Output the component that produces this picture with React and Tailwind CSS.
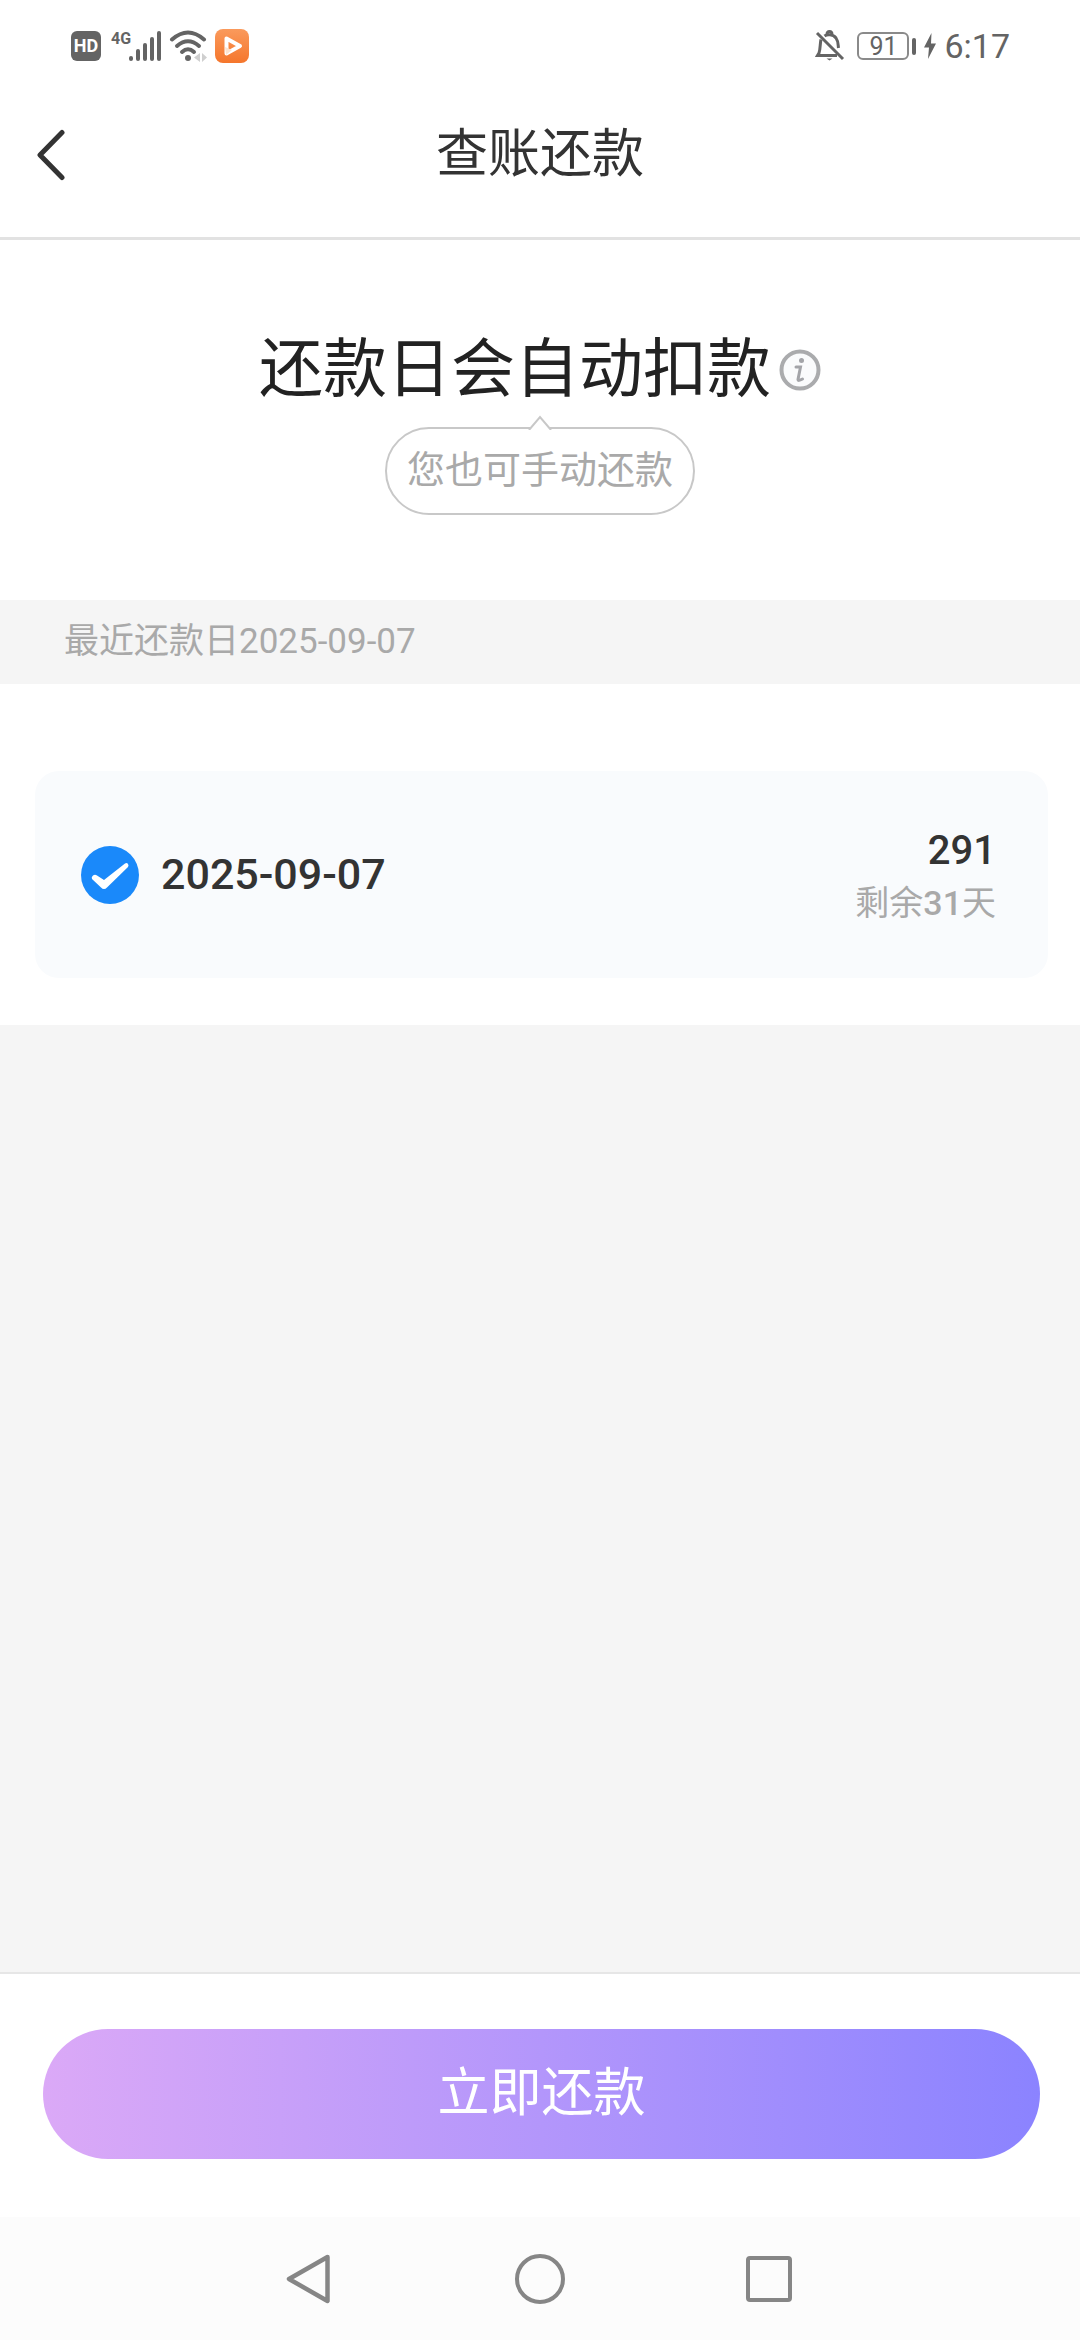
import { useState } from 'react';

function StatusBar() {
  return (
    <div className="flex items-center justify-between h-[92px] pl-[71px] pr-[70px] text-[#646464]">
      <div className="flex items-center gap-2">
        <span className="flex items-center justify-center w-[30px] h-[30px] rounded-md bg-[#646464] text-white text-lg font-bold">
          HD
        </span>
        <svg width="52" height="34" viewBox="0 0 52 34" fill="currentColor">
          <text x="2" y="15" fontSize="16" fontWeight="700">4G</text>
          <rect x="20" y="27" width="4" height="5" rx="2" />
          <rect x="27" y="20" width="4" height="12" rx="2" />
          <rect x="34" y="14" width="4" height="18" rx="2" />
          <rect x="41" y="8" width="4" height="24" rx="2" />
          <rect x="48" y="2" width="4" height="30" rx="2" />
        </svg>
        <svg width="38" height="34" viewBox="0 0 38 34" fill="none">
          <g stroke="currentColor" strokeWidth="4" strokeLinecap="round">
            <path d="M3 10.500Q19 -3.500 35 10.500" />
            <path d="M8 17Q19 7.500 30 17" />
            <path d="M13 23Q19 17.500 25 23" />
          </g>
          <circle cx="19" cy="29" r="3" fill="currentColor" />
          <path d="M31 24v9l-6-4.500zM33 24v9l5-4.500z" fill="#cfcfcf" />
        </svg>
        <svg width="34" height="34" viewBox="0 0 34 34">
          <defs>
            <linearGradient id="player" x1="0" y1="0" x2="0" y2="1">
              <stop offset="0" stopColor="#fa9a5c" />
              <stop offset="1" stopColor="#f5762c" />
            </linearGradient>
          </defs>
          <rect width="34" height="34" rx="8" fill="url(#player)" />
          <path
            d="M11.500 9.500v15L25 17z"
            fill="none"
            stroke="#fff"
            strokeWidth="4"
            strokeLinejoin="round"
          />
          <path d="M10 18l7 3-6 5z" fill="#fde3cf" />
        </svg>
      </div>

      <div className="flex items-center gap-2">
        <svg
          width="30"
          height="34"
          viewBox="0 0 30 34"
          fill="none"
          stroke="currentColor"
          strokeWidth="3"
        >
          <path d="M6 10.500C5 14 5.500 20 4 24L2.500 26.500H22" />
          <path d="M9.500 7C12 5 18 5 21 9C23.500 12.500 23 16 23.500 19" />
          <path d="M12 5.500Q12 2.500 14.500 2.500T17 5.500" />
          <path d="M2 4L28 30" />
          <path d="M11.500 29.500h6l-3 2z" fill="currentColor" stroke="none" />
        </svg>
        <div className="flex items-center gap-[3px] ml-1">
          <span className="flex items-center justify-center w-[52px] h-[28px] border-2 border-[#8a8a8a] rounded-md text-[25px] leading-none">
            91
          </span>
          <span className="w-1 h-[17px] rounded-sm bg-[#646464]" />
        </div>
        <svg width="12" height="26" viewBox="0 0 12 26" fill="currentColor">
          <path d="M7.500 0L0 14.500h5L4 26l8-15.500H7z" />
        </svg>
        <span className="text-[34px] leading-none">6:17</span>
      </div>
    </div>
  );
}

function Header() {
  return (
    <header className="grid grid-cols-[1fr_auto_1fr] items-center h-[148px] pb-5 border-b-3 border-[#e2e2e2]">
      <button aria-label="返回" className="justify-self-start px-9">
        <svg
          width="30"
          height="52"
          viewBox="0 0 30 52"
          fill="none"
          stroke="#333"
          strokeWidth="5"
          strokeLinecap="round"
          strokeLinejoin="round"
        >
          <path d="M26 3.500L4 26l22 22.500" />
        </svg>
      </button>
      <h1 className="text-[52px] leading-none text-[#333]">查账还款</h1>
    </header>
  );
}

function Notice() {
  return (
    <section className="flex flex-col items-center h-[360px] pt-[98px]">
      <div className="flex items-center gap-2">
        <h2 className="text-[64px] leading-[64px] text-[#222]">还款日会自动扣款</h2>
        <button aria-label="说明">
          <svg width="42" height="42" viewBox="0 0 42 42" fill="none">
            <circle cx="21" cy="21" r="18.500" fill="#fafbfc" stroke="#aaabad" strokeWidth="4" />
            <circle cx="22.500" cy="11.500" r="2.500" fill="#a3a4a8" />
            <path
              d="M17 18h4.500L19 30.500q0 2 4.500-.5"
              stroke="#a3a4a8"
              strokeWidth="3"
              strokeLinecap="round"
            />
          </svg>
        </button>
      </div>
      <div className="relative flex items-center h-[88px] mt-[25px] pb-0.5 px-5 border-2 border-[#c8c8c8] rounded-full text-[38px] leading-none text-[#a9a9a9]">
        <svg
          className="absolute left-1/2 -top-[14px] -translate-x-1/2"
          width="24"
          height="15"
          viewBox="0 0 24 15"
        >
          <path d="M1 15L12 2l11 13" fill="#fff" stroke="#c8c8c8" strokeWidth="2" />
        </svg>
        您也可手动还款
      </div>
    </section>
  );
}

function BillItem({ date, amount, days }) {
  const [checked, setChecked] = useState(true);

  return (
    <label className="flex items-center h-[207px] pl-[46px] pr-[52px] rounded-3xl bg-[#f9fbfd]">
      <span className="grid shrink-0">
        <input
          type="checkbox"
          checked={checked}
          onChange={e => setChecked(e.target.checked)}
          className="col-start-1 row-start-1 appearance-none w-[58px] h-[58px] rounded-full border-2 border-[#c8c8c8] checked:border-0 checked:bg-[#1a89fa]"
        />
        <svg
          className="col-start-1 row-start-1 pointer-events-none"
          width="58"
          height="58"
          viewBox="0 0 58 58"
          fill="#fff"
        >
          <path d="M11 33q-1-2 1-3.500t4 0l7 4.500L44 17.500q2-1 3 .5t0 3L26 41.500q-3 3-6 0z" />
        </svg>
      </span>
      <span className="flex-1 ml-[22px] text-[43px] leading-none font-medium text-[#333]">{date}</span>
      <span className="flex flex-col items-end gap-2">
        <span className="text-[40px] leading-[48px] font-medium text-[#333]">{amount}</span>
        <span className="text-[34px] leading-[40px] text-[#a9a9a9]">
          剩余<b className="font-medium">{days}</b>天
        </span>
      </span>
    </label>
  );
}

function NavBar() {
  return (
    <nav className="flex items-center justify-between h-[123px] pl-[284px] pr-[288px] bg-[#fcfcfc]">
      <button aria-label="后退">
        <svg width="50" height="50" viewBox="0 0 50 50" fill="none">
          <path
            d="M43.500 3L5 25l38.500 22z"
            stroke="#868686"
            strokeWidth="4.500"
            strokeLinejoin="round"
          />
        </svg>
      </button>
      <button aria-label="主页" className="w-[50px] h-[50px] border-4 border-[#868686] rounded-full" />
      <button aria-label="最近任务" className="w-[46px] h-[46px] border-4 border-[#868686] rounded-sm" />
    </nav>
  );
}

export default function App() {
  return (
    <div className="flex flex-col min-h-screen bg-[#f5f5f5] font-[Roboto,'Noto_Sans_CJK_SC',sans-serif]">
      <div className="bg-white">
        <StatusBar />
        <Header />
        <Notice />
      </div>

      <p className="flex items-center h-[84px] px-16 pb-0.5 text-[35px] leading-none text-[#a9a9a9]">
        最近还款日2025-09-07
      </p>

      <main className="bg-white pt-[87px] pb-[47px] pl-[35px] pr-8">
        <BillItem date="2025-09-07" amount="291" days={31} />
      </main>

      <footer className="mt-auto">
        <div className="pt-[55px] pb-[58px] pl-[43px] pr-10 bg-white border-t-2 border-[#e6e6e6]">
          <button className="w-full h-[130px] rounded-full bg-linear-to-r/srgb from-[#dba9f7] to-[#8b83ff] text-[52px] leading-none text-white">
            立即还款
          </button>
        </div>
        <NavBar />
      </footer>
    </div>
  );
}
